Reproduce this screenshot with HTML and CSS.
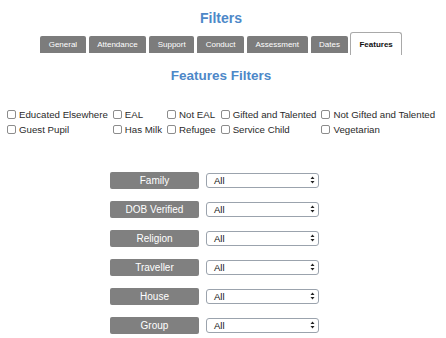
FILE: index.html
```html
<!DOCTYPE html>
<html lang="en">
<head>
  <meta charset="UTF-8">
  <meta name="viewport" content="width=device-width, initial-scale=1.0">
  <title>Filters</title>
  <link rel="stylesheet" href="styles.css">
</head>
<body>
  <div class="page">
    <h1>Filters</h1>

    <div class="tabs">
      <span class="tab">General</span>
      <span class="tab">Attendance</span>
      <span class="tab">Support</span>
      <span class="tab">Conduct</span>
      <span class="tab">Assessment</span>
      <span class="tab">Dates</span>
      <span class="tab active">Features</span>
    </div>

    <h2>Features Filters</h2>

    <div class="checks">
      <label class="check"><span class="box"></span>Educated Elsewhere</label>
      <label class="check"><span class="box"></span>EAL</label>
      <label class="check"><span class="box"></span>Not EAL</label>
      <label class="check"><span class="box"></span>Gifted and Talented</label>
      <label class="check"><span class="box"></span>Not Gifted and Talented</label>
      <label class="check"><span class="box"></span>Guest Pupil</label>
      <label class="check"><span class="box"></span>Has Milk</label>
      <label class="check"><span class="box"></span>Refugee</label>
      <label class="check"><span class="box"></span>Service Child</label>
      <label class="check"><span class="box"></span>Vegetarian</label>
    </div>

    <div class="selects">
      <div class="row">
        <span class="field">Family</span>
        <span class="picker">All<svg class="arrows" width="5" height="8" viewBox="0 0 5 8"><path d="M2.5 0.5 L4.5 3 L0.5 3 Z M0.5 5 L4.5 5 L2.5 7.5 Z" fill="#222"/></svg></span>
      </div>
      <div class="row">
        <span class="field">DOB Verified</span>
        <span class="picker">All<svg class="arrows" width="5" height="8" viewBox="0 0 5 8"><path d="M2.5 0.5 L4.5 3 L0.5 3 Z M0.5 5 L4.5 5 L2.5 7.5 Z" fill="#222"/></svg></span>
      </div>
      <div class="row">
        <span class="field">Religion</span>
        <span class="picker">All<svg class="arrows" width="5" height="8" viewBox="0 0 5 8"><path d="M2.5 0.5 L4.5 3 L0.5 3 Z M0.5 5 L4.5 5 L2.5 7.5 Z" fill="#222"/></svg></span>
      </div>
      <div class="row">
        <span class="field">Traveller</span>
        <span class="picker">All<svg class="arrows" width="5" height="8" viewBox="0 0 5 8"><path d="M2.5 0.5 L4.5 3 L0.5 3 Z M0.5 5 L4.5 5 L2.5 7.5 Z" fill="#222"/></svg></span>
      </div>
      <div class="row">
        <span class="field">House</span>
        <span class="picker">All<svg class="arrows" width="5" height="8" viewBox="0 0 5 8"><path d="M2.5 0.5 L4.5 3 L0.5 3 Z M0.5 5 L4.5 5 L2.5 7.5 Z" fill="#222"/></svg></span>
      </div>
      <div class="row">
        <span class="field">Group</span>
        <span class="picker">All<svg class="arrows" width="5" height="8" viewBox="0 0 5 8"><path d="M2.5 0.5 L4.5 3 L0.5 3 Z M0.5 5 L4.5 5 L2.5 7.5 Z" fill="#222"/></svg></span>
      </div>
    </div>
  </div>
</body>
</html>
```

FILE: styles.css
```css
body {
  font-family: "Liberation Sans", Arial, sans-serif;
  margin: 0;
  color: #222;
  background: #fff;
}
.page {
  width: 442px;
  padding-top: 10px;
}
h1, h2 {
  text-align: center;
  color: #4d88c8;
  font-weight: bold;
  line-height: 16px;
  margin: 0;
}
h1 {
  font-size: 14px;
}
h2 {
  font-size: 13.5px;
  margin-top: 13px;
}
.tabs {
  display: flex;
  justify-content: center;
  align-items: flex-end;
  gap: 3px;
  height: 23px;
  margin-top: 6px;
}
.tab {
  background-color: #7c7c7c;
  color: #fff;
  font-size: 8px;
  line-height: 17px;
  padding: 0 8.5px;
  border-radius: 2px 2px 0 0;
  margin-bottom: 2px;
}
.tab.active {
  background-color: #fff;
  color: #111;
  font-weight: bold;
  border: 1px solid #a9a9a9;
  border-bottom: none;
  border-radius: 3px 3px 0 0;
  padding: 3px 8px 2px;
  margin-bottom: 0;
  margin-left: -1px;
}
.checks {
  display: grid;
  grid-template-columns: repeat(5, auto);
  justify-content: start;
  column-gap: 5px;
  margin-top: 23px;
  padding-left: 7px;
  font-size: 9.7px;
  line-height: 15px;
  color: #2a2a2a;
}
.check {
  display: flex;
  align-items: center;
  white-space: nowrap;
}
.box {
  width: 7px;
  height: 7px;
  border: 1px solid #8c8c8c;
  border-radius: 2px;
  margin-right: 3px;
  background: #fff;
}
.selects {
  display: flex;
  flex-direction: column;
  gap: 12px;
  margin-top: 35px;
  padding-left: 110px;
}
.row {
  display: flex;
  align-items: center;
}
.field {
  width: 89px;
  height: 17px;
  line-height: 17px;
  background-color: #808080;
  color: #fff;
  font-size: 10px;
  text-align: center;
  border-radius: 2px;
}
.picker {
  position: relative;
  box-sizing: border-box;
  width: 113px;
  height: 15px;
  margin-left: 7px;
  padding-left: 7px;
  border: 1px solid #9ba3ad;
  border-radius: 3px;
  font-size: 9.5px;
  line-height: 13px;
  color: #111;
}
.arrows {
  position: absolute;
  right: 3px;
  top: 2px;
}
```
